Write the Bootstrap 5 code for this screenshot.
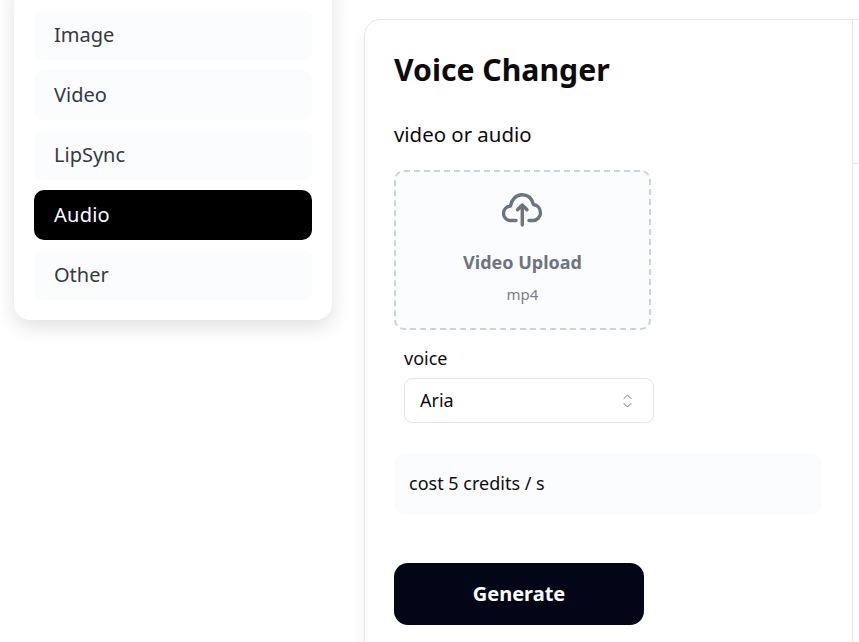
<!doctype html>
<html lang="en">
<head>
<meta charset="utf-8">
<title>Voice Changer</title>
<link href="https://cdn.jsdelivr.net/npm/bootstrap@5.3.0/dist/css/bootstrap.min.css" rel="stylesheet">
<style>
html,body{height:100%;overflow:hidden;background:#fff}
body{font-family:"Noto Sans","Liberation Sans",sans-serif;color:#0d0d0d}
.stage{width:859px;height:642px;overflow:hidden;gap:32px;padding-left:14px}
.side-panel{width:318px;height:340px;margin-top:-20px;padding:30px 20px 20px;background:#fff;border-radius:0 0 16px 16px;box-shadow:0 7px 20px rgba(0,0,0,.12);gap:10px;flex:none}
.side-item{height:50px;border-radius:10px;background:#fafcfd;color:#343a40;font-size:20px;padding-left:20px;line-height:50px;text-decoration:none;display:block}
.side-item.is-on{background:#000;color:#fff;letter-spacing:.25px}
.main-panel{width:489px;height:660px;margin-top:19px;border:1px solid #e6e8ea;border-radius:16px 0 0 16px;padding:29px 30px 30px 29px;flex:none;box-shadow:-4px 4px 12px rgba(0,0,0,.03)}
.panel-title{font-size:30.200px;font-weight:700;line-height:42px;margin:0;color:#0b0b0b}
.field-label{font-size:20.400px;line-height:28px;margin:29px 0 22px;color:#0b0b0b}
.drop-zone{width:257px;height:160px;border:2px dashed #ced4d6;border-radius:10px;background:#fafcfd;color:#6c757d;padding-top:21px}
.drop-title{font-size:18px;font-weight:700;line-height:26px;margin-top:22px}
.drop-sub{font-size:15px;line-height:20px;margin-top:9px;color:#7a8087}
.voice-wrap{margin:15px 0 0 10px;width:250px}
.voice-label{font-size:18px;line-height:26px;margin-bottom:7px}
.voice-select{height:45px;border:1px solid #e3e5e8;border-radius:8px;padding:0 21px 0 15px;font-size:18px}
.cost-box{width:428px;height:60px;margin-top:31px;background:#fafcfd;border-radius:10px;padding-left:15px;font-size:18px;line-height:58px}
.gen-btn{width:250px;height:62px;margin-top:49px;background:#020617;color:#fff;border:0;border-radius:14px;font-size:20px;font-weight:700;padding:0}
.gen-btn:hover{background:#020617;color:#fff}
.next-pane{flex:1;margin-top:19px;margin-left:-32px;border-top:1px solid #e6e8ea}
.next-rule{margin-top:143px;border-top:1px solid #e6e8ea}
</style>
</head>
<body>
<div class="stage d-flex">
  <nav class="side-panel d-flex flex-column">
    <a class="side-item" href="#">Image</a>
    <a class="side-item" href="#">Video</a>
    <a class="side-item" href="#">LipSync</a>
    <a class="side-item is-on" href="#">Audio</a>
    <a class="side-item" href="#">Other</a>
  </nav>
  <main class="main-panel">
    <h1 class="panel-title">Voice Changer</h1>
    <div class="field-label">video or audio</div>
    <div class="drop-zone d-flex flex-column align-items-center">
      <svg width="42" height="34" viewBox="1 0 42 34" fill="none" stroke="#6c757d" stroke-width="3.400" stroke-linecap="round" stroke-linejoin="round" aria-hidden="true">
        <path d="M15 27.500H9.500C5.500 27.500 2.500 24 2.500 20.500C2.500 16.500 5.500 13.500 9.500 13C10.500 6.500 15 1.800 21 1.800C27 1.800 31 6 32.500 11.500C36.500 12 39.500 15.500 39.500 20C39.500 24 36 27.500 32 27.500H28"/>
        <path d="M21.300 32V12M16.500 16.800L21.300 12L26 16.800"/>
      </svg>
      <div class="drop-title">Video Upload</div>
      <div class="drop-sub">mp4</div>
    </div>
    <div class="voice-wrap">
      <div class="voice-label">voice</div>
      <div class="voice-select d-flex align-items-center justify-content-between">
        <span>Aria</span>
        <svg width="9" height="14" viewBox="0 0 9 14" fill="none" stroke="#6b7280" stroke-width="1" stroke-linecap="round" stroke-linejoin="round" aria-hidden="true"><path d="M1 4.500L4.500 1L8 4.500M1 9.500L4.500 13L8 9.500"/></svg>
      </div>
    </div>
    <div class="cost-box">cost 5 credits / s</div>
    <button class="btn gen-btn" type="button">Generate</button>
  </main>
  <div class="next-pane"><div class="next-rule"></div></div>
</div>
<script src="https://cdn.jsdelivr.net/npm/bootstrap@5.3.0/dist/js/bootstrap.bundle.min.js"></script>
</body>
</html>
